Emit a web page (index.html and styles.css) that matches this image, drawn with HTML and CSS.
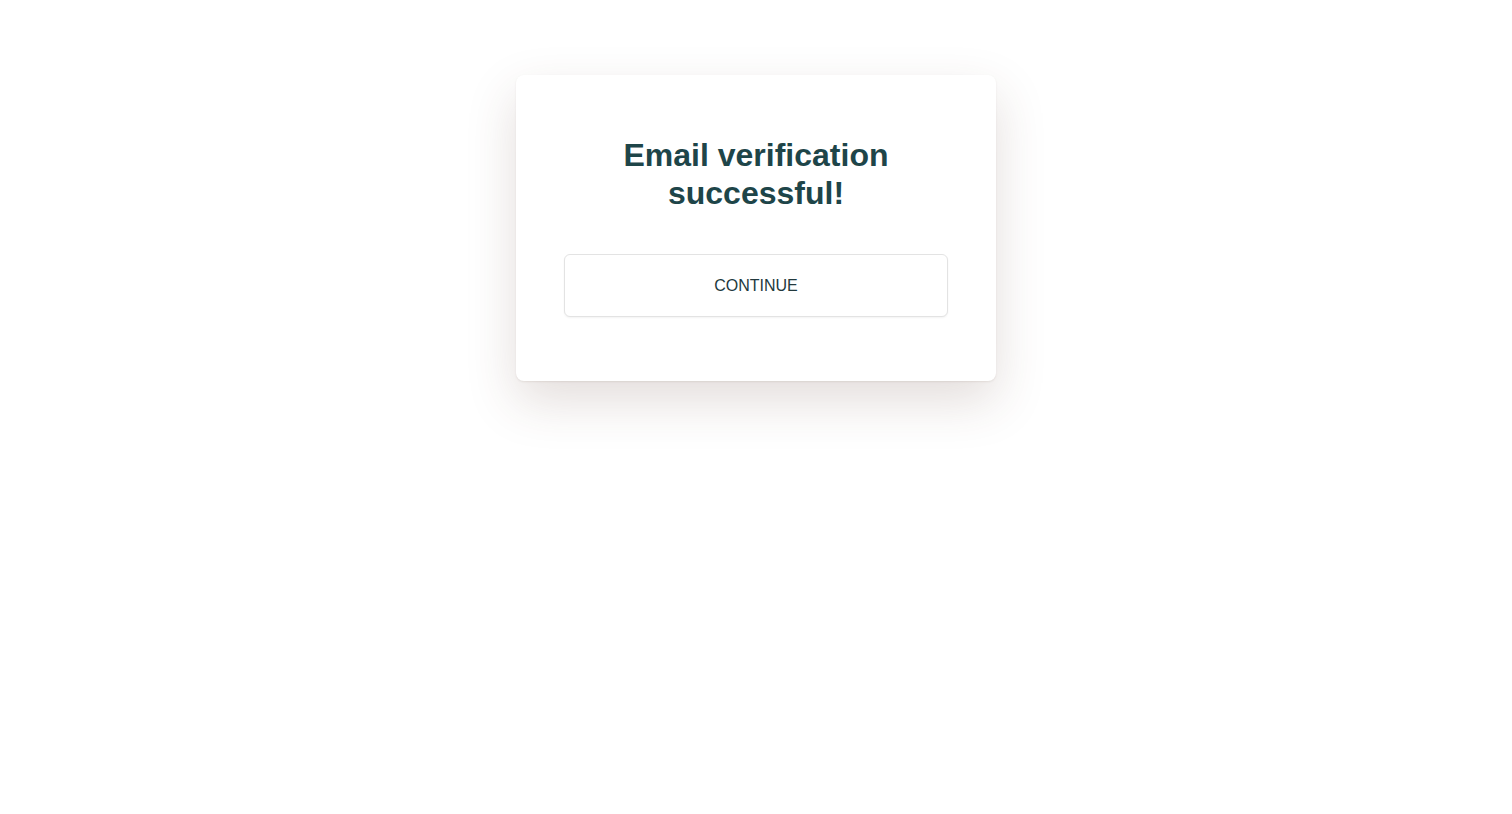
FILE: index.html
```html
<!DOCTYPE html>
<html lang="en">
<head>
<meta charset="utf-8">
<title>Email verification</title>
<link rel="stylesheet" href="styles.css">
</head>
<body>
<main class="page">
  <section class="card">
    <h1 class="title">Email verification<br>successful!</h1>
    <button class="continue" type="button">CONTINUE</button>
  </section>
</main>
</body>
</html>
```

FILE: styles.css
```css
html {
  background: #ffffff;
}
html, body {
  margin: 0;
  padding: 0;
}
body {
  font-family: "Liberation Sans", Arial, Helvetica, sans-serif;
}
.page {
  display: flex;
  justify-content: center;
  align-items: flex-start;
  box-sizing: border-box;
  min-height: 100vh;
  padding-top: 75px;
}
.card {
  width: 480px;
  box-sizing: border-box;
  padding: 61px 48px 64px;
  background: #ffffff;
  border-radius: 8px;
  box-shadow: 0 1px 2px rgba(90, 60, 40, 0.10), 0 20px 50px rgba(90, 55, 40, 0.17);
  display: flex;
  flex-direction: column;
  align-items: stretch;
  gap: 42px;
}
.title {
  margin: 0;
  text-align: center;
  font-size: 32px;
  line-height: 38px;
  font-weight: 700;
  color: #1e4549;
}
.continue {
  height: 63px;
  border: 1px solid #e3e3e3;
  border-radius: 6px;
  background: #ffffff;
  box-shadow: 0 1px 2px rgba(0, 0, 0, 0.05);
  font-family: "Liberation Sans", Arial, Helvetica, sans-serif;
  font-size: 16px;
  color: #22393d;
  cursor: pointer;
  padding: 0;
}
```
